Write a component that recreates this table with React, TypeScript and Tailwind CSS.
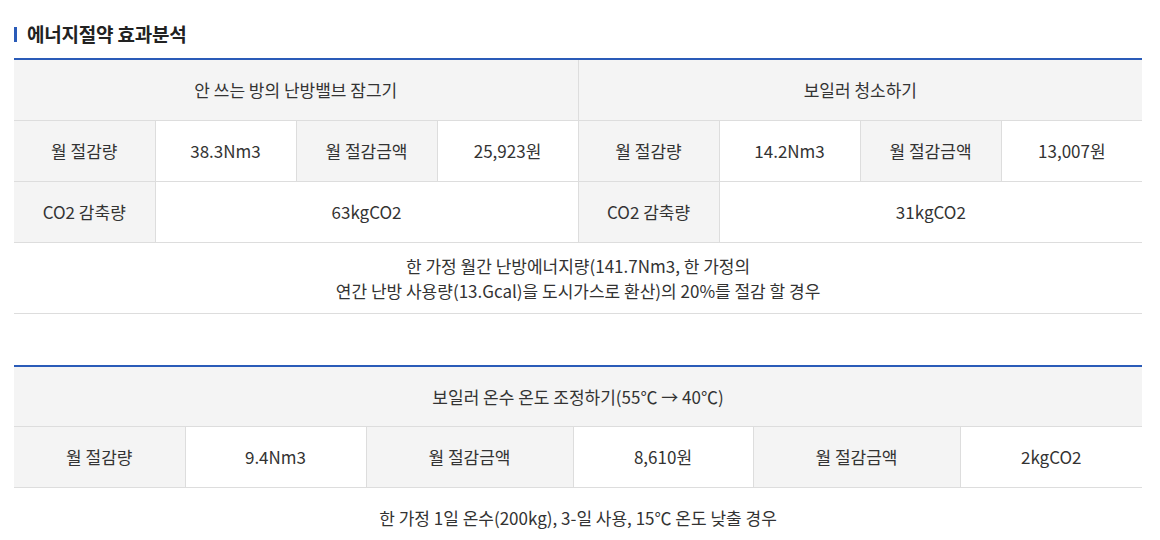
const FONT = "font-['Noto_Sans_CJK_KR','Noto_Sans',sans-serif]";

const th = 'bg-[#f4f4f4] border border-[#dddddd] font-normal h-[61px] text-center';
const td = 'bg-white border border-[#dddddd] h-[61px] text-center';

export default function App() {
  return (
    <div className={`${FONT} text-[#333333] text-[17px] w-[1160px] h-[540px] bg-white overflow-hidden pl-[14px]`}>
      {/* 제목 */}
      <div className="flex items-center gap-[10px] pt-[25px]">
        <span className="block w-[3px] h-[15px] bg-[#2a5bb8]" />
        <h2 className="text-[19px] font-bold text-[#222222] leading-[18px] tracking-[-0.2px]">에너지절약 효과분석</h2>
      </div>

      {/* 표 1 */}
      <table className="mt-[15px] w-[1128px] table-fixed border-collapse border-t-2 border-t-[#2a5bb8] border-x-0">
        <colgroup>
          {Array.from({ length: 8 }).map((_, i) => (
            <col key={i} className="w-[141px]" />
          ))}
        </colgroup>
        <thead>
          <tr>
            <th colSpan={4} className={`${th} border-l-0 border-t-0`}>안 쓰는 방의 난방밸브 잠그기</th>
            <th colSpan={4} className={`${th} border-r-0 border-t-0`}>보일러 청소하기</th>
          </tr>
        </thead>
        <tbody>
          <tr>
            <th className={`${th} border-l-0`}>월 절감량</th>
            <td className={td}>38.3Nm3</td>
            <th className={th}>월 절감금액</th>
            <td className={td}>25,923원</td>
            <th className={th}>월 절감량</th>
            <td className={td}>14.2Nm3</td>
            <th className={th}>월 절감금액</th>
            <td className={`${td} border-r-0`}>13,007원</td>
          </tr>
          <tr>
            <th className={`${th} border-l-0`}>CO2 감축량</th>
            <td colSpan={3} className={td}>63kgCO2</td>
            <th className={th}>CO2 감축량</th>
            <td colSpan={3} className={`${td} border-r-0`}>31kgCO2</td>
          </tr>
          <tr>
            <td colSpan={8} className="border-y border-[#dddddd] h-[71px] text-center leading-[25px]">
              한 가정 월간 난방에너지량(141.7Nm3, 한 가정의
              <br />
              연간 난방 사용량(13.Gcal)을 도시가스로 환산)의 20%를 절감 할 경우
            </td>
          </tr>
        </tbody>
      </table>

      {/* 표 2 */}
      <table className="mt-[51px] w-[1128px] table-fixed border-collapse border-t-2 border-t-[#2a5bb8]">
        <colgroup>
          <col className="w-[171px]" />
          <col className="w-[181px]" />
          <col className="w-[207px]" />
          <col className="w-[180px]" />
          <col className="w-[207px]" />
          <col className="w-[182px]" />
        </colgroup>
        <thead>
          <tr>
            <th colSpan={6} className={`${th} border-x-0 border-t-0`}>보일러 온수 온도 조정하기(55℃ → 40℃)</th>
          </tr>
        </thead>
        <tbody>
          <tr>
            <th className={`${th} border-l-0`}>월 절감량</th>
            <td className={td}>9.4Nm3</td>
            <th className={th}>월 절감금액</th>
            <td className={td}>8,610원</td>
            <th className={th}>월 절감금액</th>
            <td className={`${td} border-r-0`}>2kgCO2</td>
          </tr>
          <tr>
            <td colSpan={6} className="h-[60px] text-center align-middle">
              한 가정 1일 온수(200kg), 3-일 사용, 15℃ 온도 낮출 경우
            </td>
          </tr>
        </tbody>
      </table>
    </div>
  );
}
